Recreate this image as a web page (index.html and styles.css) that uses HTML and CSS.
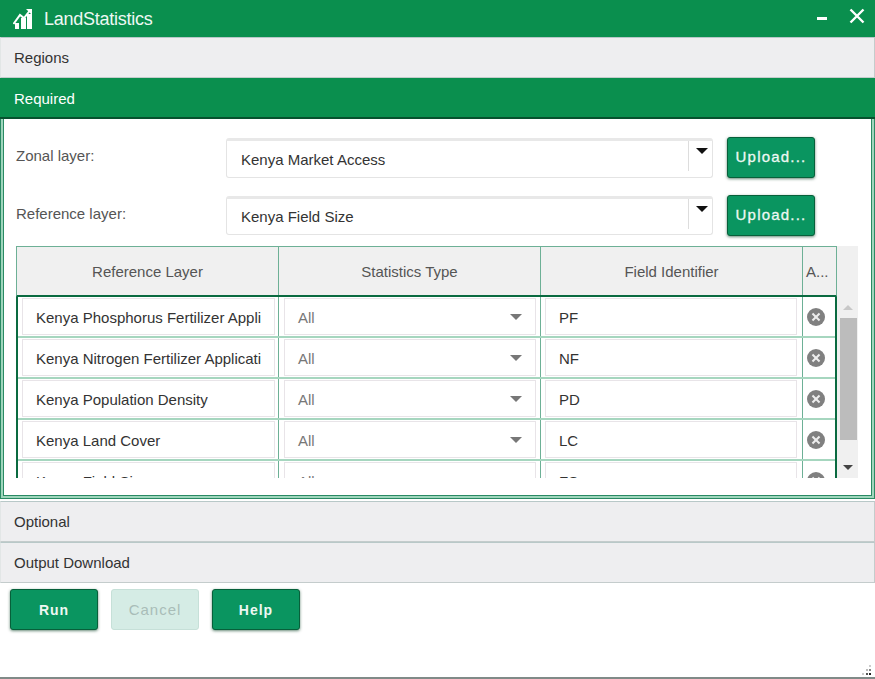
FILE: index.html
```html
<!DOCTYPE html>
<html lang="en">
<head>
    <meta charset="UTF-8">
    <title>LandStatistics</title>
    <link rel="stylesheet" href="styles.css">
</head>
<body>
<div class="window">
    <div class="titlebar">
        <svg class="logo" width="20" height="20" viewBox="0 0 20 20">
            <rect x="2" y="14" width="4" height="6" fill="#fff"/>
            <rect x="8" y="9" width="5" height="11" fill="#fff"/>
            <rect x="14" y="5" width="5" height="15" fill="#fff"/>
            <path d="M0.5 15 L7 6 L11 9 L16.5 2" fill="none" stroke="#fff" stroke-width="2"/>
            <path d="M13 0 H19 V6 Z" fill="#fff"/>
        </svg>
        <span class="title">LandStatistics</span>
        <span class="minimize"></span>
        <svg class="close" width="16" height="16" viewBox="0 0 16 16">
            <path d="M1.5 1.5 L14.5 14.5 M14.5 1.5 L1.5 14.5" stroke="#fff" stroke-width="2.4"/>
        </svg>
    </div>

    <div class="panel-head">Regions</div>
    <div class="panel-head active">Required</div>
    <div class="panel-body">
        <div class="panel-inner">
            <div class="form-row">
                <label class="form-label">Zonal layer:</label>
                <div class="combo">
                    <span class="combo-text">Kenya Market Access</span>
                    <span class="combo-btn"><i class="caret"></i></span>
                </div>
                <button class="btn upload">Upload...</button>
            </div>
            <div class="form-row">
                <label class="form-label">Reference layer:</label>
                <div class="combo">
                    <span class="combo-text">Kenya Field Size</span>
                    <span class="combo-btn"><i class="caret"></i></span>
                </div>
                <button class="btn upload">Upload...</button>
            </div>

            <div class="grid-wrap">
                <div class="grid-main">
                    <div class="grid-head">
                        <div class="th">Reference Layer</div>
                        <div class="th">Statistics Type</div>
                        <div class="th">Field Identifier</div>
                        <div class="th th-narrow">A...</div>
                    </div>
                    <div class="grid-rows">
                        <div class="tr">
                            <div class="td"><div class="cell">Kenya Phosphorus Fertilizer Appli</div></div>
                            <div class="td"><div class="cell select">All<i class="caret grey"></i></div></div>
                            <div class="td"><div class="cell">PF</div></div>
                            <div class="td td-narrow"><span class="remove"></span></div>
                        </div>
                        <div class="tr">
                            <div class="td"><div class="cell">Kenya Nitrogen Fertilizer Applicati</div></div>
                            <div class="td"><div class="cell select">All<i class="caret grey"></i></div></div>
                            <div class="td"><div class="cell">NF</div></div>
                            <div class="td td-narrow"><span class="remove"></span></div>
                        </div>
                        <div class="tr">
                            <div class="td"><div class="cell">Kenya Population Density</div></div>
                            <div class="td"><div class="cell select">All<i class="caret grey"></i></div></div>
                            <div class="td"><div class="cell">PD</div></div>
                            <div class="td td-narrow"><span class="remove"></span></div>
                        </div>
                        <div class="tr">
                            <div class="td"><div class="cell">Kenya Land Cover</div></div>
                            <div class="td"><div class="cell select">All<i class="caret grey"></i></div></div>
                            <div class="td"><div class="cell">LC</div></div>
                            <div class="td td-narrow"><span class="remove"></span></div>
                        </div>
                        <div class="tr">
                            <div class="td"><div class="cell">Kenya Field Size</div></div>
                            <div class="td"><div class="cell select">All<i class="caret grey"></i></div></div>
                            <div class="td"><div class="cell">FS</div></div>
                            <div class="td td-narrow"><span class="remove"></span></div>
                        </div>
                    </div>
                </div>
                <div class="scrollbar">
                    <div class="scroll-head"></div>
                    <i class="arrow-up"></i>
                    <div class="thumb"></div>
                    <i class="arrow-down"></i>
                </div>
            </div>
        </div>
    </div>

    <div class="panel-head optional">Optional</div>
    <div class="panel-head">Output Download</div>

    <div class="actions">
        <button class="btn">Run</button>
        <button class="btn disabled">Cancel</button>
        <button class="btn">Help</button>
    </div>

    <svg class="grip" width="12" height="12" viewBox="0 0 12 12">
        <rect x="8" y="0" width="2" height="2" fill="#ccc"/>
        <rect x="5" y="4" width="2" height="2" fill="#bbb"/>
        <rect x="8" y="4" width="2" height="2" fill="#888"/>
        <rect x="1" y="8" width="2" height="2" fill="#ccc"/>
        <rect x="5" y="8" width="2" height="2" fill="#555"/>
        <rect x="8" y="8" width="2" height="2" fill="#222"/>
    </svg>
</div>
</body>
</html>
```

FILE: styles.css
```css
*{
    box-sizing: border-box;
}
html, body{
    height: 100%;
}
body{
    margin: 0;
    background-color: #ffffff;
    font: 15px "Liberation Sans", Arial, sans-serif;
    color: #333333;
    overflow: hidden;
}
.window{
    position: relative;
    height: 679px;
    border-bottom: 2px solid #808a88;
}

.titlebar{
    display: flex;
    align-items: center;
    height: 37px;
    padding: 0 10px 0 13px;
    background-color: #0a8f4e;
    color: #ffffff;
}
.logo{
    margin-right: 11px;
}
.title{
    flex: 1;
    padding-top: 1px;
    font-size: 18px;
    letter-spacing: -0.25px;
    color: #eef8f3;
}
.minimize{
    width: 10px;
    height: 3px;
    margin-right: 22px;
    background-color: #ffffff;
}
.close{
    margin-top: -5px;
}

.panel-head{
    height: 41px;
    padding: 0 13px;
    line-height: 40px;
    background-color: #eeeef0;
    border: 1px solid #c4cccc;
    border-top-color: #b8c8c8;
    border-left-color: #e2e6e6;
    color: #333333;
}
.panel-head.active{
    background-color: #0a8f4e;
    border: 0;
    border-bottom: 2px solid #06522e;
    padding: 0 14px;
    line-height: 41px;
    color: #ffffff;
}
.panel-head.optional{
    margin-top: 2px;
}

.panel-body{
    height: 380px;
    padding: 0 2px 2px 2px;
    background-color: #9fd6bc;
    border: 1px solid #2a8a64;
    border-top: 0;
}
.panel-inner{
    height: 100%;
    padding: 18px 0 0 12px;
    background-color: #ffffff;
    border: 1px solid #2a8a64;
    border-top: 0;
}
.form-row{
    display: flex;
    align-items: flex-start;
    height: 58px;
}
.form-row + .form-row{
    height: 51px;
}
.form-label{
    width: 210px;
    padding-top: 10px;
    color: #555555;
}
.combo{
    display: flex;
    width: 487px;
    height: 40px;
    margin-top: 1px;
    border: 1px solid #e4e4e4;
    border-top: 3px solid #e8e8e8;
    border-radius: 3px;
    background-color: #ffffff;
}
.form-row + .form-row .combo{
    height: 39px;
}
.form-row + .form-row .combo-text{
    padding-top: 9px;
}
.combo-text{
    flex: 1;
    padding: 10px 0 0 14px;
    color: #333333;
}
.combo-btn{
    width: 24px;
    height: 30px;
    padding: 7px 0 0 7px;
    border-left: 1px solid #dddddd;
}
.caret{
    display: block;
    width: 0;
    height: 0;
    border-left: 6px solid transparent;
    border-right: 6px solid transparent;
    border-top: 6px solid #111111;
}
.caret.grey{
    border-top-color: #777777;
}

.btn{
    width: 88px;
    height: 41px;
    border: 1px solid #07603a;
    border-radius: 3px;
    background-color: #0a9560;
    color: #eef8f3;
    font: bold 14px "Liberation Sans", Arial, sans-serif;
    letter-spacing: 1px;
    box-shadow: 0 1px 3px rgba(0, 60, 30, 0.6);
}
.btn.upload{
    margin-left: 14px;
    padding-bottom: 3px;
    font: 15px "Liberation Sans", Arial, sans-serif;
    letter-spacing: 1.2px;
    -webkit-text-stroke: 0.3px #eef8f3;
}
.btn.disabled{
    background-color: #d5ece5;
    border-color: #c6e0d8;
    color: #a9bdb8;
    box-shadow: none;
    font: 15px "Liberation Sans", Arial, sans-serif;
    letter-spacing: 1px;
}

.grid-wrap{
    display: flex;
    width: 842px;
    height: 232px;
}
.grid-main{
    width: 821px;
}
.grid-head{
    display: grid;
    grid-template-columns: 262px 262px 262px 33px;
    height: 51px;
    background-color: #f0f0f0;
    border: 1px solid #6db096;
    border-bottom: 2px solid #0a6a40;
}
.th{
    padding-top: 16px;
    text-align: center;
    color: #555555;
    border-right: 1px solid #6db096;
}
.th-narrow{
    text-align: left;
    padding-left: 3px;
    border-right: 0;
}
.grid-rows{
    height: 181px;
    overflow: hidden;
    border-left: 2px solid #0a6a40;
    border-right: 2px solid #0a6a40;
}
.tr{
    display: grid;
    grid-template-columns: 261px 262px 262px 32px;
    height: 41px;
    border-bottom: 2px solid #a6d6bf;
}
.td{
    padding: 1px 4px;
    border-right: 1px solid #6db096;
}
.td:first-child{
    padding-right: 3px;
}
.td:nth-child(2){
    padding-left: 5px;
}
.td:nth-child(3){
    padding-right: 5px;
}
.td-narrow{
    display: flex;
    align-items: center;
    justify-content: center;
    padding: 0 6px 0 0;
    border-right: 0;
}
.cell{
    height: 37px;
    padding-left: 13px;
    line-height: 37px;
    white-space: nowrap;
    overflow: hidden;
    border: 1px solid #e8e4e8;
    background-color: #ffffff;
    color: #333333;
}
.cell.select{
    position: relative;
    color: #777777;
}
.cell.select .caret{
    position: absolute;
    right: 13px;
    top: 15px;
}
.remove{
    position: relative;
    width: 18px;
    height: 18px;
    border-radius: 50%;
    background-color: #808080;
}
.remove::before, .remove::after{
    content: "";
    position: absolute;
    left: 4px;
    top: 8px;
    width: 10px;
    height: 2px;
    background-color: #eeeeee;
}
.remove::before{
    transform: rotate(45deg);
}
.remove::after{
    transform: rotate(-45deg);
}

.scrollbar{
    position: relative;
    display: flex;
    flex-direction: column;
    align-items: flex-end;
    width: 21px;
    height: 232px;
    padding-right: 1px;
    background-color: #f0f0f0;
}
.scroll-head{
    width: 100%;
    height: 51px;
}
.thumb{
    width: 17px;
    height: 122px;
    margin-top: 21px;
    background-color: #bcbcbc;
}
.arrow-up, .arrow-down{
    position: absolute;
    left: 6px;
    width: 0;
    height: 0;
    border-left: 5px solid transparent;
    border-right: 5px solid transparent;
}
.arrow-up{
    top: 59px;
    border-bottom: 5px solid #c8c8c8;
}
.arrow-down{
    top: 219px;
    border-top: 5px solid #444444;
}

.actions{
    display: flex;
    gap: 13px;
    padding: 6px 0 0 10px;
}

.grip{
    position: absolute;
    right: 2px;
    bottom: 0;
}
```
